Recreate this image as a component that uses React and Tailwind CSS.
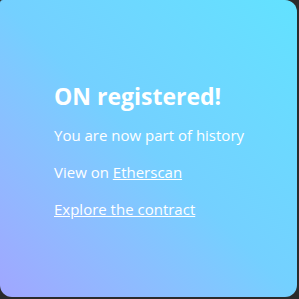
export default function App() {
  return (
    <div className="w-[299px] h-[299px] bg-[#2b2b2b]" style={{ fontFamily: '"Segoe UI", "Open Sans", sans-serif' }}>
      <div className="w-[297px] h-[297px] rounded-[12px] rounded-tl-[3px] bg-linear-45 from-[#a0a6ff] via-[#74d0ff] to-[#62e2ff] flex flex-col justify-center pl-[54px] text-white">
        <h1 className="text-[23px] font-bold leading-[32px] mb-[12px] mt-[2px]">ON registered!</h1>
        <p className="text-[15px] leading-[22px] mb-[15px]">You are now part of history</p>
        <p className="text-[15px] leading-[22px] mb-[15px]">
          View on <a href="#" className="underline">Etherscan</a>
        </p>
        <p className="text-[15px] leading-[22px]">
          <a href="#" className="underline">Explore the contract</a>
        </p>
      </div>
    </div>
  )
}
